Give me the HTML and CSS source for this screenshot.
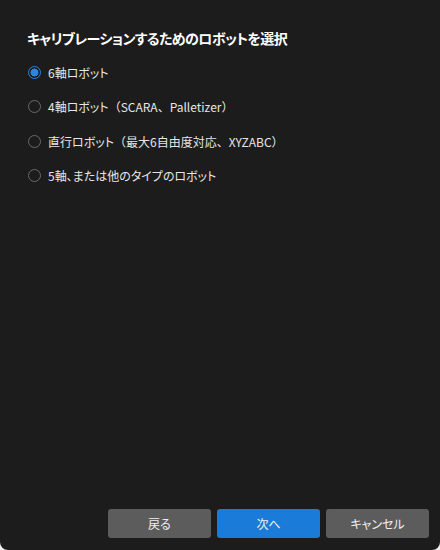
FILE: index.html
```html
<!DOCTYPE html>
<html lang="ja">
<head>
<meta charset="utf-8">
<link rel="stylesheet" href="styles.css">
</head>
<body>
<div class="dialog">
  <h1 class="title">キャリブレーションするためのロボットを選択</h1>
  <div class="options">
    <label class="option"><span class="radio checked"></span><span class="label">6軸ロボット</span></label>
    <label class="option"><span class="radio"></span><span class="label">4軸ロボット<span class="fw">（</span>SCARA<span class="fw">、</span>Palletizer<span class="fw">）</span></span></label>
    <label class="option"><span class="radio"></span><span class="label">直行ロボット<span class="fw">（</span>最大6自由度対応<span class="fw">、</span>XYZABC<span class="fw">）</span></span></label>
    <label class="option"><span class="radio"></span><span class="label">5軸、または他のタイプのロボット</span></label>
  </div>
  <div class="footer">
    <button class="btn">戻る</button>
    <button class="btn primary">次へ</button>
    <button class="btn">キャンセル</button>
  </div>
</div>
</body>
</html>
```
FILE: styles.css
```css
html, body {
  margin: 0;
  padding: 0;
  background: #f0f0f0;
}
body {
  font-family: "Noto Sans CJK JP", "Noto Sans", sans-serif;
}
.dialog {
  width: 440px;
  height: 550px;
  box-sizing: border-box;
  background: #1c1c1c;
  border-radius: 0 0 8px 8px;
  display: flex;
  flex-direction: column;
  padding: 27px 11px 12px 27px;
}
.title {
  margin: 0;
  font-size: 14px;
  font-weight: 700;
  letter-spacing: -0.6px;
  font-feature-settings: "palt";
  color: #ffffff;
  line-height: 22px;
}
.options {
  display: flex;
  flex-direction: column;
  gap: 14.5px;
  margin-top: 13px;
}
.option {
  display: flex;
  align-items: center;
  height: 20px;
}
.radio {
  width: 13px;
  height: 13px;
  box-sizing: border-box;
  border: 1px solid #6a6a6a;
  border-radius: 50%;
  margin-left: 1px;
  margin-right: 7px;
  flex: none;
}
.radio.checked {
  border: 1.5px solid #2a86e0;
  background: radial-gradient(circle, #2a86e0 0 3.8px, #1c1c1c 4.2px);
}
.label {
  font-size: 12px;
  font-feature-settings: "palt";
  color: #e6e6e6;
}
.fw {
  font-feature-settings: normal;
}
.footer {
  margin-top: auto;
  display: flex;
  justify-content: flex-end;
  gap: 6px;
}
.btn {
  width: 103px;
  height: 29px;
  border: none;
  border-radius: 3px;
  background: #5c5c5c;
  color: #f0f0f0;
  font-family: inherit;
  font-feature-settings: "palt";
  font-size: 12px;
  padding: 0;
}
.btn.primary {
  background: #1a7bd8;
}
```
